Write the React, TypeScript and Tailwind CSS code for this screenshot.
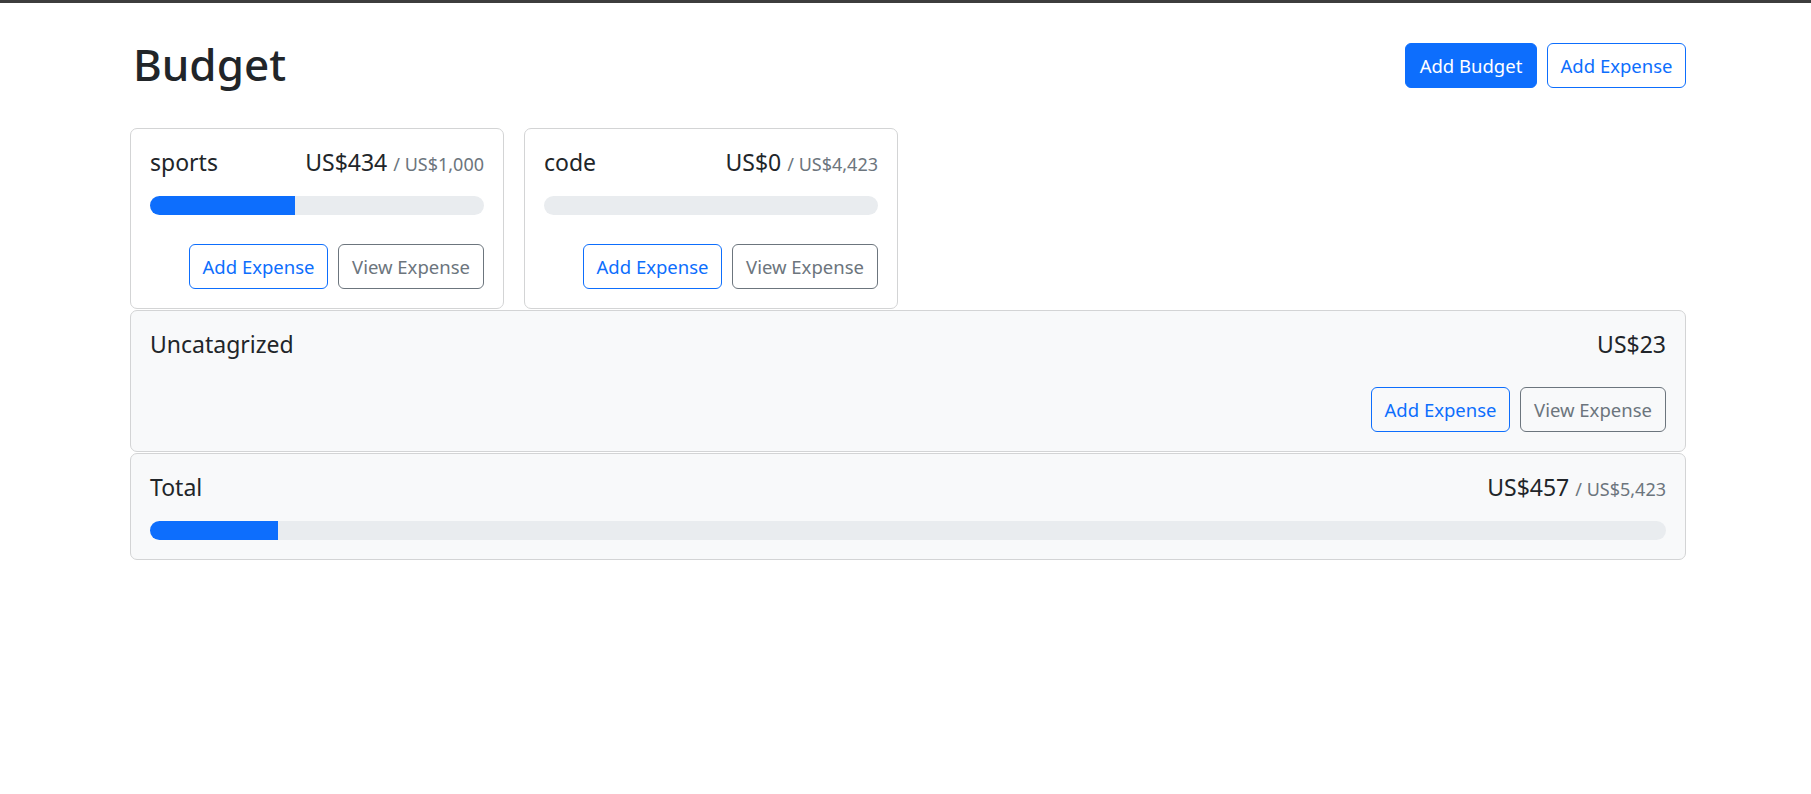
import React from "react";

const font = { fontFamily: '"Segoe UI", "Noto Sans", "Open Sans", sans-serif' };

function Btn({ kind, children, w }: { kind: "primary" | "outline" | "secondary"; children: React.ReactNode; w: string }) {
  const base = "h-[45px] rounded-[6px] border text-[18.5px] flex items-center justify-center whitespace-nowrap " + w;
  if (kind === "primary") return <button className={base + " bg-[#0d6efd] border-[#0d6efd] text-white"}>{children}</button>;
  if (kind === "outline") return <button className={base + " bg-transparent border-[#0d6efd] text-[#0d6efd]"}>{children}</button>;
  return <button className={base + " bg-transparent border-[#6c757d] text-[#6c757d]"}>{children}</button>;
}

function Progress({ pct }: { pct: number }) {
  return (
    <div className="h-[19px] rounded-full bg-[#e9ecef] overflow-hidden flex">
      <div className="h-full bg-[#0d6efd]" style={{ width: `${pct}%` }} />
    </div>
  );
}

function Amount({ amt, max }: { amt: string; max?: string }) {
  return (
    <div className="flex items-baseline leading-[29px]">
      <span className="text-[23px]">{amt}</span>
      {max && <span className="text-[18px] text-[#6c757d] ml-[6px]">/ {max}</span>}
    </div>
  );
}

function TitleRow({ name, amt, max, mb }: { name: string; amt: string; max?: string; mb: string }) {
  return (
    <div className={"h-[28px] flex items-baseline justify-between " + mb}>
      <span className="text-[23px] leading-[29px]">{name}</span>
      <Amount amt={amt} max={max} />
    </div>
  );
}

function BudgetCard({ name, amt, max, pct }: { name: string; amt: string; max: string; pct: number }) {
  return (
    <div className="w-[374px] border border-[#d3d4d5] rounded-[7px] bg-white p-[19px]">
      <TitleRow name={name} amt={amt} max={max} mb="mb-[20px]" />
      <Progress pct={pct} />
      <div className="flex justify-end gap-[10px] mt-[29px]">
        <Btn kind="outline" w="w-[139px]">Add Expense</Btn>
        <Btn kind="secondary" w="w-[146px]">View Expense</Btn>
      </div>
    </div>
  );
}

export default function App() {
  return (
    <div className="min-h-[794px] bg-white text-[#212529]" style={font}>
      <div className="h-[3px] bg-[#3d3d3d]" />
      <div className="ml-[130px] w-[1556px] pt-[35px]">
        <div className="h-[55px] flex items-center gap-[10px] mb-[35px]">
          <h1 className="text-[44px] leading-[52px] mb-[3px] font-medium mr-auto pl-[3px]">Budget</h1>
          <Btn kind="primary" w="w-[132px]">Add Budget</Btn>
          <Btn kind="outline" w="w-[139px]">Add Expense</Btn>
        </div>
        <div className="flex gap-[20px]">
          <BudgetCard name="sports" amt="US$434" max="US$1,000" pct={43.4} />
          <BudgetCard name="code" amt="US$0" max="US$4,423" pct={0} />
        </div>
        <div className="mt-[1px] border border-[#d3d4d5] rounded-[7px] bg-[#f8f9fa] p-[19px]">
          <TitleRow name="Uncatagrized" amt="US$23" mb="mb-0" />
          <div className="flex justify-end gap-[10px] mt-[29px]">
            <Btn kind="outline" w="w-[139px]">Add Expense</Btn>
            <Btn kind="secondary" w="w-[146px]">View Expense</Btn>
          </div>
        </div>
        <div className="mt-[1px] border border-[#d3d4d5] rounded-[7px] bg-[#f8f9fa] p-[19px]">
          <TitleRow name="Total" amt="US$457" max="US$5,423" mb="mb-[20px]" />
          <Progress pct={(457 / 5423) * 100} />
        </div>
      </div>
    </div>
  );
}
